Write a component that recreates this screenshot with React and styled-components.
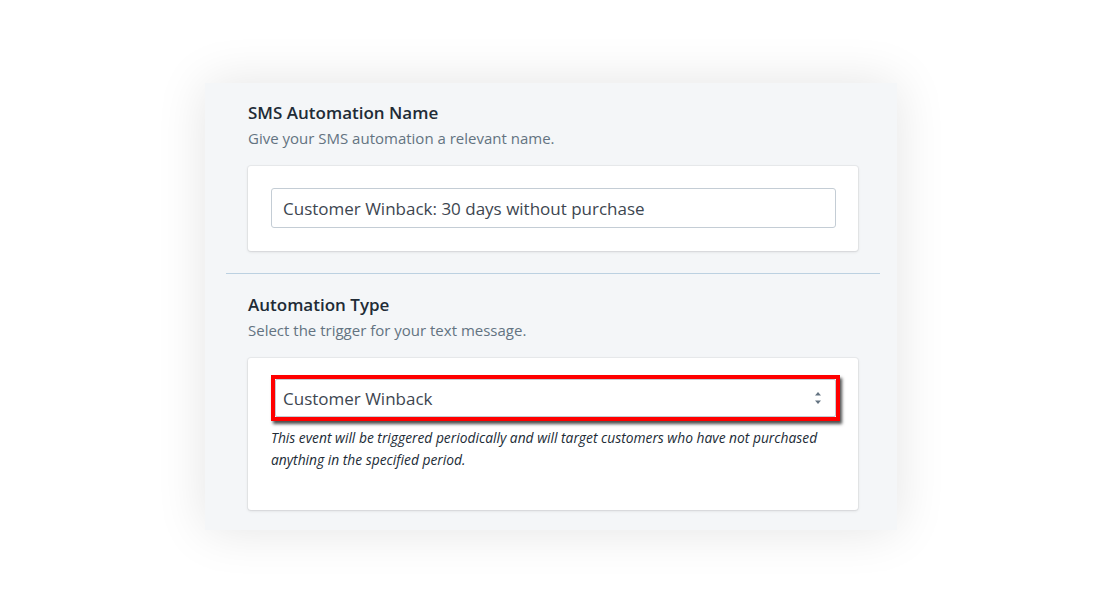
import React from 'react';
import styled, { createGlobalStyle } from 'styled-components';

const GlobalStyle = createGlobalStyle`
  html, body {
    margin: 0;
    padding: 0;
    background: #ffffff;
  }
  body {
    font-family: "Open Sans", "Noto Sans", "Liberation Sans", sans-serif;
    color: #212b36;
  }
`;

const Page = styled.div`
  min-height: 100vh;
  display: flex;
  align-items: flex-start;
  justify-content: center;
  padding: 83px 6px 0 0;
  box-sizing: border-box;
`;

const Panel = styled.div`
  width: 692px;
  background: #f4f6f8;
  box-shadow: 0 0 48px rgba(0, 0, 0, 0.11);
  padding: 0 17px 0 21px;
  box-sizing: border-box;
`;

const Section = styled.section`
  padding: ${p => p.$top}px 22px ${p => p.$bottom}px 22px;
`;

const Divider = styled.hr`
  margin: 0;
  border: none;
  border-top: 1px solid #bcd1e1;
`;

const Heading = styled.h2`
  margin: 0;
  font-size: 17px;
  line-height: 24px;
  font-weight: 600;
  color: #212b36;
`;

const Subtitle = styled.p`
  margin: 3px 0 18px;
  font-size: 15px;
  line-height: 20px;
  color: #637381;
`;

const Card = styled.div`
  background: #ffffff;
  border-radius: 3px;
  box-shadow: 0 0 0 1px rgba(63, 63, 68, 0.05), 0 1px 3px 0 rgba(63, 63, 68, 0.15);
  padding: ${p => p.$pad};
`;

const TextInput = styled.input`
  display: block;
  width: 100%;
  box-sizing: border-box;
  height: 40px;
  padding: 0 11px;
  border: 1px solid #c4cdd5;
  border-radius: 3px;
  font-family: inherit;
  font-size: 17px;
  color: #3d4650;
  background: #ffffff;
  outline: none;
`;

const Highlight = styled.div`
  border: 4px solid #ff0000;
  box-shadow: 2px 3px 3px rgba(0, 0, 0, 0.7);
  margin-right: 2px;
`;

const SelectBox = styled.div`
  position: relative;
  height: 38px;
  box-sizing: border-box;
  display: flex;
  align-items: center;
  padding: 0 7px;
  border: 1px solid #c4cdd5;
  border-radius: 2px;
  background: #ffffff;
  font-size: 17px;
  color: #3d4650;
`;

const Arrows = styled.svg`
  position: absolute;
  right: 14px;
  top: 50%;
  transform: translateY(-50%);
`;

const HelpText = styled.p`
  margin: 6px 0 0;
  font-size: 13.8px;
  line-height: 22px;
  font-style: italic;
  color: #212b36;
`;

export default function App() {
  return (
    <>
      <GlobalStyle />
      <Page>
        <Panel>
          <Section $top={18} $bottom={22}>
            <Heading>SMS Automation Name</Heading>
            <Subtitle>Give your SMS automation a relevant name.</Subtitle>
            <Card $pad="22px 22px 23px 23px">
              <TextInput readOnly value="Customer Winback: 30 days without purchase" />
            </Card>
          </Section>
          <Divider />
          <Section $top={19} $bottom={20}>
            <Heading>Automation Type</Heading>
            <Subtitle>Select the trigger for your text message.</Subtitle>
            <Card $pad="17px 16px 39px 23px">
              <Highlight>
                <SelectBox>
                  Customer Winback
                  <Arrows width="6" height="12" viewBox="0 0 6 12">
                    <path d="M3 0 L6 3.5 H0 Z" fill="#637381" />
                    <path d="M0 8.5 H6 L3 12 Z" fill="#637381" />
                  </Arrows>
                </SelectBox>
              </Highlight>
              <HelpText>
                This event will be triggered periodically and will target customers who have not purchased anything in the specified period.
              </HelpText>
            </Card>
          </Section>
        </Panel>
      </Page>
    </>
  );
}
